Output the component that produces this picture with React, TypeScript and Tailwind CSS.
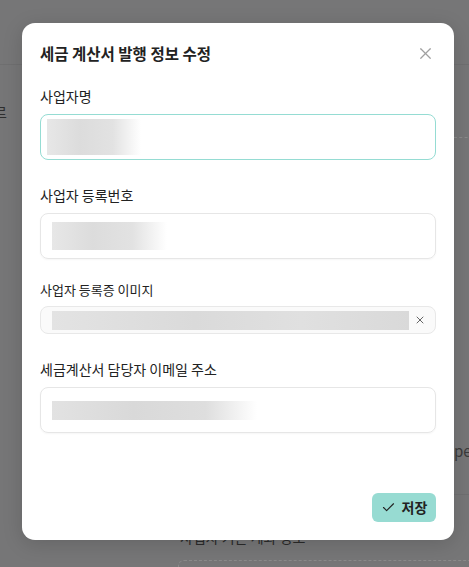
import { Check, X } from "lucide-react";

const font = { fontFamily: '"Noto Sans CJK KR", "Noto Sans", sans-serif' };

function Blur({ w }: { w: string }) {
  return (
    <div
      className={`h-full ${w} bg-[linear-gradient(90deg,#e7e7e7_0%,#dcdcdc_35%,#e2e2e2_70%,#ffffff_100%)]`}
    />
  );
}

export default function App() {
  return (
    <div className="relative h-[567px] w-[469px] overflow-hidden bg-[#767677]" style={font}>
      {/* 뒤쪽 페이지 (딤 처리) */}
      <div aria-hidden className="pointer-events-none absolute inset-0">
        <div className="mt-[64px] h-px w-full bg-[#6f6f70]" />
        <div className="absolute left-[-6px] top-[102px] text-[14px] text-[#2e2e2e]">르</div>
        <div className="absolute left-[454px] top-[137px] w-[40px] border-t border-dashed border-[#8a8a8a]" />
        <div className="absolute left-[454px] top-[440px] text-[15px] text-[#3a3a3a]">pe</div>
        <div className="absolute left-[454px] top-[494px] h-px w-[40px] bg-[#6f6f70]" />
        <div className="absolute left-[180px] top-[527px] text-[14px] leading-[20px] text-[#2a2a2a]">사업자 기본 계좌 정보</div>
        <div className="absolute left-[178px] top-[560px] h-[20px] w-[320px] rounded-md border border-dashed border-[#8a8a8a]" />
      </div>

      {/* 모달 */}
      <div className="absolute left-[22px] top-[23px] flex h-[517px] w-[432px] flex-col rounded-[13px] bg-white px-[18px] pb-[18px] pt-[18px] shadow-[0_4px_20px_rgba(0,0,0,0.15)]">
        <div className="flex items-center justify-between">
          <h2 className="text-[15.5px] font-bold leading-[24px] text-[#222]">세금 계산서 발행 정보 수정</h2>
          <button className="mr-[1px] text-[#a0a0a0]">
            <X size={19} strokeWidth={1.5} />
          </button>
        </div>

        <label className="mt-[21px] text-[14px] leading-[20px] text-[#222]">사업자명</label>
        <div className="mt-[8px] h-[46px] rounded-[8px] border-[1.5px] border-[#95dcd3] px-[6px] py-[4px]">
          <Blur w="w-[94px]" />
        </div>

        <label className="mt-[25px] text-[14px] leading-[20px] text-[#222]">사업자 등록번호</label>
        <div className="mt-[8px] h-[46px] rounded-[8px] border border-[#e6e6e6] px-[11px] py-[8px] shadow-[0_1px_2px_rgba(0,0,0,0.04)]">
          <Blur w="w-[115px]" />
        </div>

        <label className="mt-[22px] text-[13px] leading-[18px] text-[#222]">사업자 등록증 이미지</label>
        <div className="mt-[7px] flex h-[28px] items-center gap-[5px] rounded-[8px] border border-[#e8e8e8] bg-[#fafafa] pl-[11px] pr-[9px]">
          <div className="h-[19px] flex-1 bg-[linear-gradient(90deg,#e3e3e3,#dadada_40%,#e0e0e0_70%,#d9d9d9)]" />
          <X size={12} strokeWidth={1.8} className="text-[#555]" />
        </div>

        <label className="mt-[25px] text-[14px] leading-[20px] text-[#222]">세금계산서 담당자 이메일 주소</label>
        <div className="mt-[8px] flex h-[46px] items-center rounded-[8px] border border-[#e6e6e6] px-[11px] shadow-[0_1px_2px_rgba(0,0,0,0.04)]">
          <div className="h-[19px] w-[205px] bg-[linear-gradient(90deg,#e2e2e2_0%,#d9d9d9_40%,#dedede_75%,#ffffff_100%)]" />
        </div>

        <div className="mt-auto flex justify-end">
          <button className="flex h-[29px] w-[64px] items-center justify-center gap-[6px] rounded-[6px] bg-[#97dbd2] text-[14px] font-bold text-[#222]">
            <Check size={15} strokeWidth={1.8} />
            저장
          </button>
        </div>
      </div>
    </div>
  );
}
